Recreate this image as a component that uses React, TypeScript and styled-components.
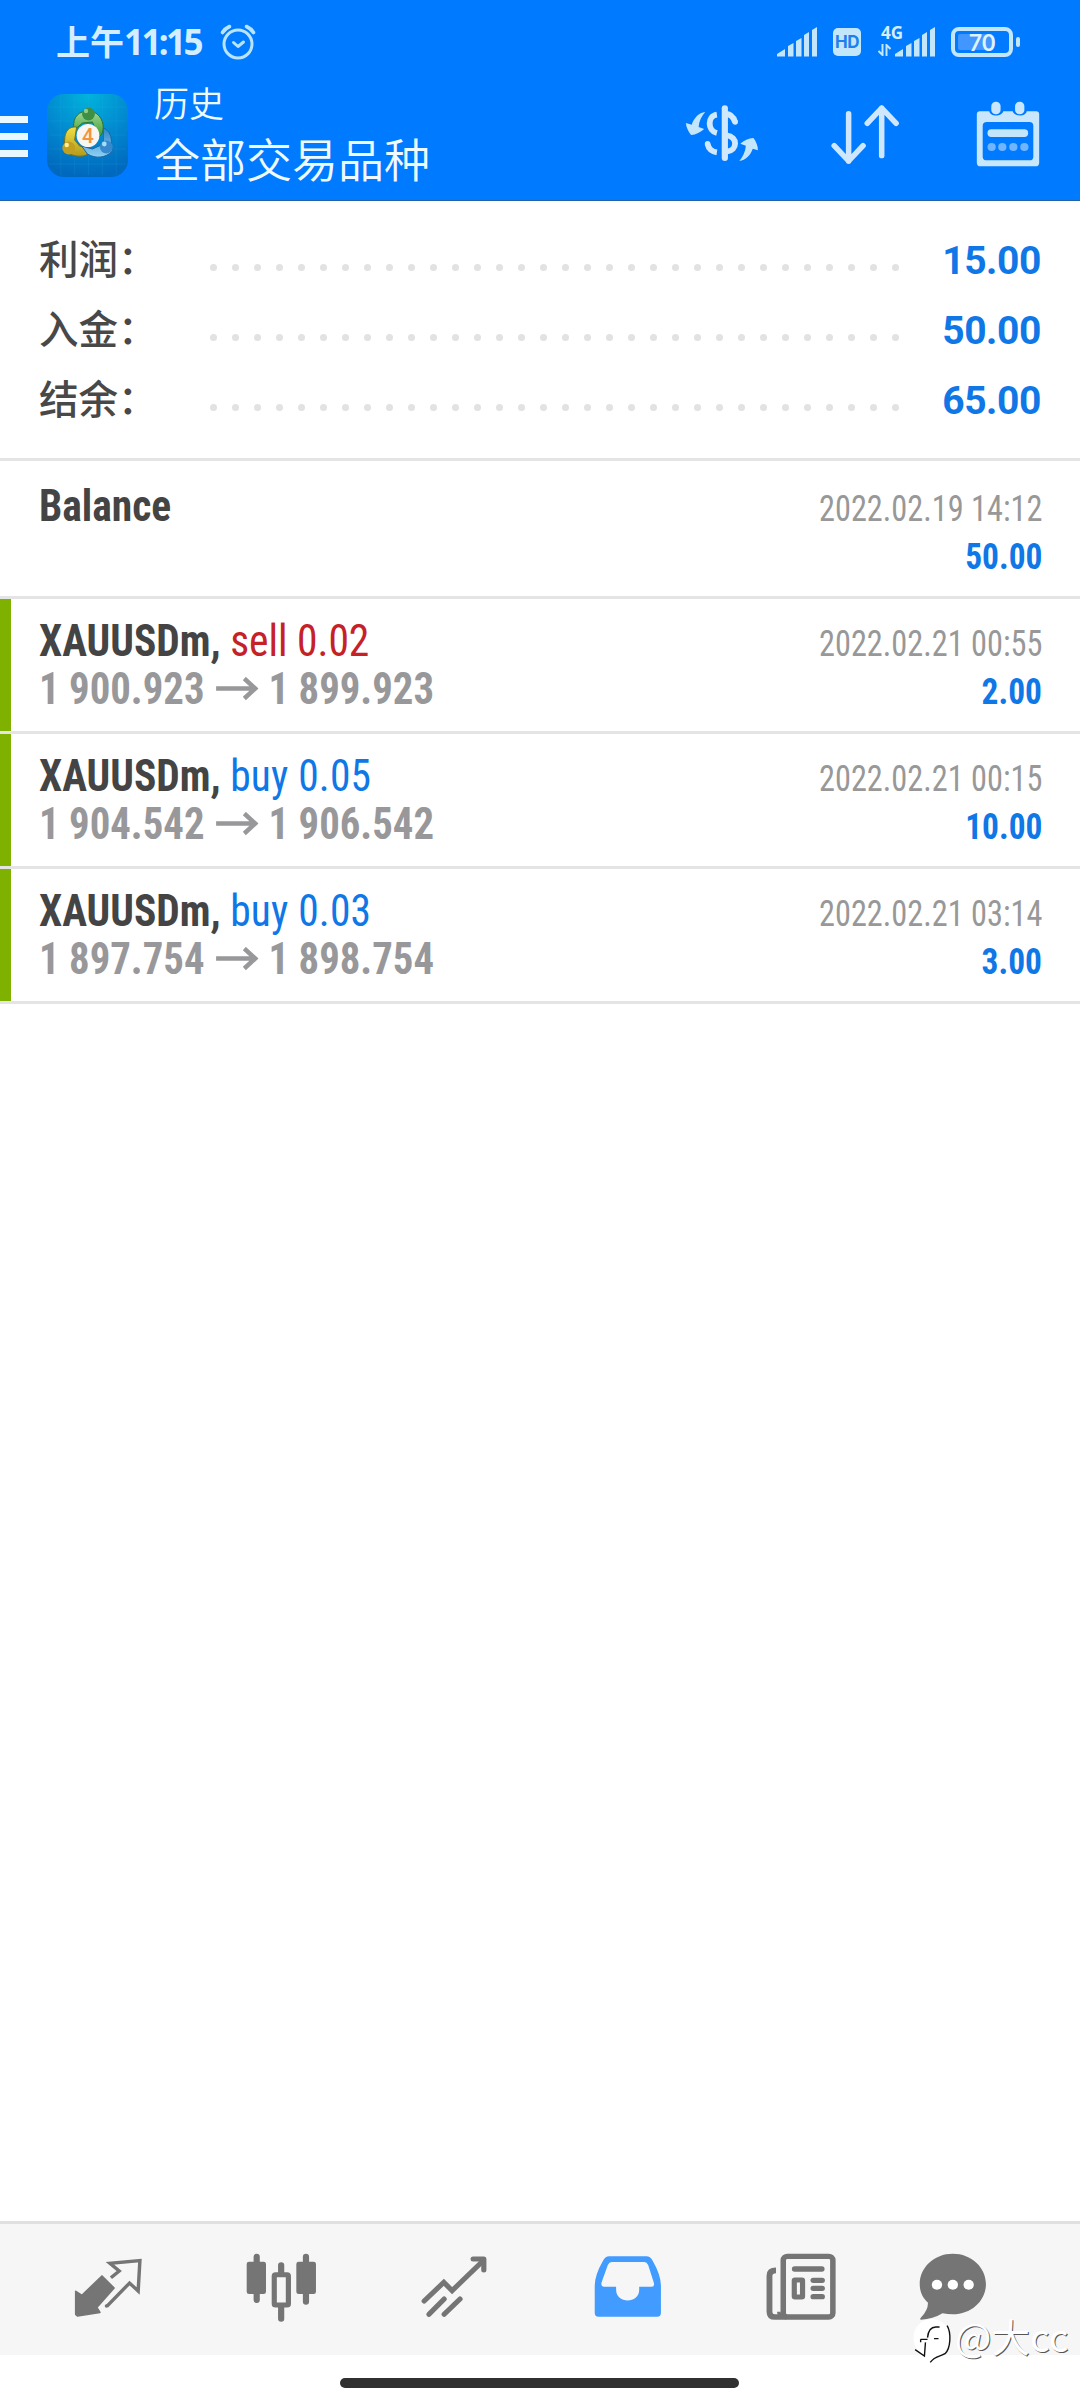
import React from "react";
import styled, { createGlobalStyle } from "styled-components";

const GlobalStyle = createGlobalStyle`
  * { box-sizing: border-box; }
  body { margin: 0; background: #fff; }
`;

const cjk = `"Noto Sans CJK SC", sans-serif`;
const latin = `Roboto, "Noto Sans CJK SC", sans-serif`;
const condensed = `"Roboto Condensed", Roboto, sans-serif`;
const accent = "#0f77e6";

const Screen = styled.div`
  position: relative;
  width: 1080px;
  height: 2400px;
  display: flex;
  flex-direction: column;
  background: #fff;
  overflow: hidden;
`;

const Header = styled.header`
  height: 201px;
  background: #007aff;
  border-bottom: 1px solid #1f63a6;
  display: flex;
  flex-direction: column;
  flex: none;
`;

const StatusBar = styled.div`
  height: 80px;
  padding: 3px 60px 0 56px;
  display: flex;
  align-items: center;
  justify-content: space-between;
`;

const StatusGroup = styled.div`
  display: flex;
  align-items: center;
`;

const Clock = styled.span`
  display: flex;
  align-items: baseline;
  font: 700 34px/40px ${cjk};
  color: #d5eeff;
  margin-right: 19px;
`;

const ClockDigits = styled.span`
  font: 700 35px/40px "Noto Sans", sans-serif;
  letter-spacing: -2.6px;
`;

const HdBadge = styled.span`
  width: 28px;
  height: 28px;
  margin: 1px 17px 0 16px;
  border-radius: 5px;
  background: #c4e6fb;
  color: #1e80ee;
  font: 700 17px/29px Inter, sans-serif;
  letter-spacing: -0.5px;
  text-align: center;
`;

const NetworkType = styled.span`
  display: flex;
  flex-direction: column;
  width: 17px;
  height: 32px;
  font: 700 17px/14px "Noto Sans", sans-serif;
  color: #d5eeff;
  white-space: nowrap;
`;

const NetworkLabel = styled.span`
  padding-left: 3px;
  height: 18px;
`;

const Battery = styled.span`
  position: relative;
  width: 62px;
  height: 30px;
  margin: 0 3px 0 16px;
  border: 4px solid #c4e6fb;
  border-radius: 8px;
  padding: 3px;
  display: flex;
`;

const BatteryFill = styled.span<{ $level: number }>`
  width: ${(p) => p.$level}%;
  background: #4296ff;
  border-radius: 2px;
`;

const BatteryText = styled.span`
  position: absolute;
  inset: 0;
  text-align: center;
  font: 700 23px/23px Lato, sans-serif;
  color: #dff2ff;
`;

const BatteryNub = styled.span`
  width: 4px;
  height: 10px;
  border-radius: 2px;
  background: #c4e6fb;
`;

const Toolbar = styled.div`
  flex: 1;
  display: flex;
  align-items: flex-start;
`;

const MenuButton = styled.button`
  width: 28px;
  height: 41px;
  margin: 36px 19px 0 0;
  padding: 0;
  border: 0;
  background: none;
  display: flex;
  flex-direction: column;
  justify-content: space-between;
`;

const MenuLine = styled.span`
  width: 28px;
  height: 7px;
  background: #e9f7ff;
`;

const LogoSvg = styled.svg`
  margin-top: 14px;
`;

const Titles = styled.div`
  margin-left: 26px;
  flex: 1;
  color: #effaff;
  font-family: ${cjk};
`;

const Caption = styled.div`
  font-size: 35px;
  line-height: 44px;
  font-weight: 350;
`;

const Title = styled.div`
  font-size: 46px;
  line-height: 56px;
  margin-top: 5px;
  font-weight: 350;
`;

const Actions = styled.div`
  display: grid;
  grid-template-columns: 139px 153px 72px;
  padding-right: 36px;
`;

const Summary = styled.section`
  height: 260px;
  flex: none;
  padding: 23px 39px 0 39px;
  border-bottom: 3px solid #e4e4e4;
`;

const SummaryRow = styled.div`
  height: 70px;
  display: grid;
  grid-template-columns: 171px 689px 1fr;
  align-items: baseline;
`;

const SummaryLabel = styled.span`
  font: 500 39.5px/66px ${cjk};
  color: #484848;
  white-space: nowrap;
`;

const Leader = styled.span`
  display: flex;
  justify-content: space-between;
  transform: translateY(-3px);
`;

const Dot = styled.span`
  width: 7px;
  height: 7px;
  border-radius: 50%;
  background: #e2e2e2;
`;

const SummaryValue = styled.span`
  font: 700 39px/66px ${latin};
  letter-spacing: -0.4px;
  color: ${accent};
  text-align: right;
`;

const DealRow = styled.article<{ $first: boolean }>`
  height: ${(p) => (p.$first ? 138 : 135)}px;
  flex: none;
  display: grid;
  grid-template-columns: 11px 1fr;
  border-bottom: 3px solid #e4e4e4;
  padding-top: ${(p) => (p.$first ? 3 : 0)}px;
`;

const Marker = styled.span<{ $on: boolean }>`
  background: ${(p) => (p.$on ? "#7fb100" : "transparent")};
`;

const DealBody = styled.div`
  padding: 18px 38px 0 28px;
`;

const DealLine = styled.div`
  height: 48px;
  display: flex;
  align-items: baseline;
  justify-content: space-between;
  white-space: nowrap;
  font-family: ${condensed};
  font-stretch: 75%;
  line-height: 48px;
`;

const Symbol = styled.span`
  font-size: 44px;
  font-weight: 700;
  color: #444;
  transform: scaleX(0.942);
  transform-origin: left;
`;

const Side = styled.span<{ $side: "buy" | "sell" }>`
  font-weight: 400;
  letter-spacing: ${(p) => (p.$side === "buy" ? 0.2 : 0)}px;
  color: ${(p) => (p.$side === "buy" ? accent : "#c62127")};
`;

const Price = styled.span`
  font-size: 44px;
  font-weight: 700;
  color: #98989b;
  transform: scaleX(0.927);
  transform-origin: left;
`;

const ArrowSvg = styled.svg`
  margin: 0 11px 3px 12px;
`;

const Time = styled.span`
  font-size: 36.5px;
  color: #989898;
  transform: scaleX(0.885);
  transform-origin: right;
`;

const Amount = styled.span`
  font-size: 36.5px;
  font-weight: 700;
  color: ${accent};
  transform: scaleX(0.915);
  transform-origin: right;
`;

const Spacer = styled.div`
  flex: 1;
`;

const Nav = styled.nav`
  height: 134px;
  flex: none;
  border-top: 3px solid #e0e0e0;
  background: #f6f6f6;
  padding-left: 21px;
  display: flex;
`;

const NavItem = styled.button<{ $width: number }>`
  width: ${(p) => p.$width}px;
  padding: 0;
  border: 0;
  background: none;
  display: flex;
  justify-content: center;
`;

const Gesture = styled.div`
  height: 45px;
  flex: none;
  display: flex;
  justify-content: center;
  padding: 23px 2px 0 0;
`;

const HomeBar = styled.span`
  width: 399px;
  height: 10px;
  border-radius: 5px;
  background: #303030;
`;

const Watermark = styled.div`
  position: absolute;
  left: 910px;
  top: 2313px;
  display: flex;
  align-items: flex-start;
`;

const WatermarkText = styled.span`
  font: 400 38.5px/44px ${cjk};
  color: #fff;
  text-shadow: 1px 1px 0 #555;
`;

type IconProps = { box: string; w: number; h: number; children: React.ReactNode };

const Icon = ({ box, w, h, children }: IconProps) => (
  <svg width={w} height={h} viewBox={box} preserveAspectRatio="none" fill="none">
    {children}
  </svg>
);

const AlarmIcon = () => (
  <svg width="36" height="36" viewBox="0 0 36 36" fill="none" stroke="#b8e4ff" strokeWidth="3" strokeLinecap="round">
    <circle cx="18" cy="20" r="14" />
    <path d="M2.5 8.5Q5 4.500 9.500 2.500M33.500 8.500Q31 4.500 26.500 2.500" strokeWidth="3.600" />
    <path d="M13.500 18.500L18 22.500L23.500 18" strokeLinejoin="round" />
  </svg>
);

const SignalIcon = () => (
  <svg width="40" height="30" viewBox="0 0 40 30" fill="#c4e6fb">
    <path d="M0 29.500V27L8 22V29.500ZM11 29.500V19L16.500 16V29.500ZM19 29.500V14L24.500 11V29.500ZM27 29.500V8L32 5V29.500ZM35 29.500V3L40 0V29.500Z" />
  </svg>
);

const DataArrows = () => (
  <svg width="13" height="12" viewBox="0 0 13 12" fill="none" stroke="#c4e6fb" strokeWidth="2">
    <path d="M4.500 0V11L0.500 7M8.500 12V1L12.500 5" />
  </svg>
);

const AppLogo = () => (
  <LogoSvg width="81" height="83" viewBox="0 0 82 83" preserveAspectRatio="none">
    <defs>
      <radialGradient id="sky" cx="0.5" cy="0" r="1">
        <stop offset="0" stopColor="#00b4dc" />
        <stop offset="0.55" stopColor="#0288cf" />
        <stop offset="1" stopColor="#0068bd" />
      </radialGradient>
      <linearGradient id="green" x1="0" y1="0" x2="0" y2="1">
        <stop offset="0" stopColor="#a2d99c" />
        <stop offset="1" stopColor="#3b9a2d" />
      </linearGradient>
      <linearGradient id="gold" x1="0" y1="0" x2="0" y2="1">
        <stop offset="0" stopColor="#f0df45" />
        <stop offset="1" stopColor="#b39a1c" />
      </linearGradient>
      <linearGradient id="blue" x1="0" y1="0" x2="0" y2="1">
        <stop offset="0" stopColor="#2f86c8" />
        <stop offset="1" stopColor="#8fd0f4" />
      </linearGradient>
    </defs>
    <rect width="82" height="83" rx="17" fill="url(#sky)" />
    <path d="M14 2V81M28 2V81M42 2V81M56 2V81M70 2V81M2 13H80M2 27H80M2 41H80M2 55H80M2 70H80" stroke="#35b5e8" strokeOpacity="0.15" />
    <path d="M27 34C26 22 33 17 42 17C51 17 57 25 57 34C57 38 55 42 52 43L46 28L36 29L30 34Z" fill="url(#green)" stroke="#28752a" />
    <path d="M30 33C22 32 18 38 18 45L17 56C22 61 32 64 40 61L43 55L33 52L28 46Z" fill="url(#gold)" stroke="#77711c" />
    <path d="M57 34C63 36 66 43 65 50L66 57C60 64 49 65 41 60L35 52L46 55L57 50Z" fill="url(#blue)" stroke="#1d669f" />
    <circle cx="42" cy="20" r="6.500" fill="#3e8f43" />
    <circle cx="39.500" cy="17" r="2.200" fill="#8ecb8c" />
    <circle cx="22" cy="54" r="6.500" fill="#c0a01e" />
    <circle cx="20" cy="51" r="2.200" fill="#fff0a0" />
    <circle cx="60" cy="53" r="6.500" fill="#3689cc" />
    <circle cx="58" cy="50" r="2.400" fill="#a5dcfb" />
    <circle cx="41.500" cy="41.500" r="11.500" fill="#f8f5f2" />
    <text x="41.500" y="49" fontFamily="Roboto, sans-serif" fontSize="21" fontWeight="500" textAnchor="middle" fill="#f5923e">4</text>
  </LogoSvg>
);

const CurrencyIcon = () => (
  <Icon box="407 240 261 300" w={90} h={100}>
    <g stroke="#d0e8fc" strokeWidth="17" fill="none">
      <path d="M537 325V474" strokeLinecap="round" strokeWidth="18" />
      <path d="M514 344C486 348 486 392 514 399" />
      <path d="M537 341C552 341 562 349 567 367" />
      <circle cx="567" cy="366" r="8" fill="#d0e8fc" stroke="none" />
      <path d="M487 432C490 446 500 455 514 457" />
      <circle cx="487" cy="431" r="8" fill="#d0e8fc" stroke="none" />
      <path d="M542 406C575 410 575 451 542 455" />
    </g>
    <path d="M480 336C462 338 447 354 441 374L424 369C425 382 431 395 439 405C453 404 467 397 477 387L461 381C462 363 470 348 480 336Z" fill="#c4e6fb" />
    <path d="M579 483C597 480 612 465 618 446L633 451C633 438 628 425 620 414C606 415 592 422 582 431L598 437C597 455 589 470 579 483Z" fill="#c4e6fb" />
  </Icon>
);

const SortIcon = () => (
  <Icon box="810 240 270 300" w={93} h={100}>
    <path d="M896 341V484M854 437L896 483L938 437M992 467V324M950 370L992 324L1034 370" stroke="#cfe7fd" strokeWidth="16" strokeLinecap="round" strokeLinejoin="round" />
  </Icon>
);

const CalendarIcon = () => (
  <Icon box="1255 240 209 300" w={72} h={100}>
    <path fillRule="evenodd" d="M1278 334H1305C1308 351 1341 351 1346 334H1373C1378 351 1411 351 1414 334H1441Q1450 334 1450 343V488Q1450 499 1439 499H1280Q1269 499 1269 488V343Q1269 334 1278 334ZM1298 366Q1286 366 1286 378V470Q1286 481 1298 481H1422Q1433 481 1433 470V378Q1433 366 1422 366Z" fill="#c9e7fc" />
    <rect x="1311" y="305" width="27" height="38" rx="13" fill="#c9e7fc" />
    <rect x="1380" y="305" width="27" height="38" rx="13" fill="#c9e7fc" />
    <rect x="1300" y="388" width="118" height="23" rx="11" fill="#c4e6fb" />
    {[1312, 1343, 1375, 1407].map((x) => (
      <circle key={x} cx={x} cy="441" r="12" fill="#70b5ff" />
    ))}
  </Icon>
);

const gray = "#757575";

const QuotesIcon = () => (
  <Icon box="213 73 203 393" w={70} h={131}>
    <path d="M297 229L332 265L282 323L291 338L226 349L221 344V275L239 287Z" fill={gray} stroke={gray} strokeWidth="5" strokeLinejoin="round" />
    <path d="M323 234L347 214L320 191L407 183L402 274L377 250L311 320" stroke={gray} strokeWidth="10" />
    <circle cx="310" cy="319" r="5" fill={gray} />
  </Icon>
);

const ChartIcon = () => (
  <Icon box="714 73 206 393" w={71} h={131}>
    <path d="M745 171V301M888 171V306M816 197V220M816 322V357" stroke={gray} strokeWidth="18" strokeLinecap="round" />
    <rect x="716" y="186" width="56" height="97" rx="7" fill={gray} />
    <rect x="860" y="186" width="57" height="97" rx="7" fill={gray} />
    <rect x="796" y="225" width="41" height="91" rx="4" stroke={gray} strokeWidth="15" />
  </Icon>
);

const TradeIcon = () => (
  <Icon box="1217 73 203 393" w={70} h={131}>
    <path d="M1232 304L1289 248L1313 273L1400 186M1246 344L1290 298M1290 344L1336 298" stroke={gray} strokeWidth="15" strokeLinecap="round" />
    <path d="M1374 178H1405V211" stroke={gray} strokeWidth="15" strokeLinecap="round" strokeLinejoin="round" />
  </Icon>
);

const HistoryIcon = () => (
  <Icon box="153 73 203 393" w={70} h={131}>
    <path fillRule="evenodd" d="M200 170H308Q319 170 326 183Q350 226 350 258V339Q350 351 339 351H169Q158 351 158 339V258Q158 226 182 183Q189 170 200 170ZM207 187Q200 187 196 196L178 248Q175 261 184 261H220V270C220 313 287 313 287 270V261H323Q333 261 329 248L313 196Q309 187 302 187Z" fill="#429bff" />
  </Icon>
);

const NewsIcon = () => (
  <Icon box="653 73 209 393" w={72} h={131}>
    <rect x="706" y="170" width="144" height="182" rx="12" stroke={gray} strokeWidth="16" />
    <path d="M685 212Q666 212 666 228V336Q666 352 682 352H716" stroke={gray} strokeWidth="17" />
    <path d="M693 336Q693 347 704 347" stroke={gray} strokeWidth="10" />
    <path d="M739 208H818M793 242H819M793 266H819M793 291H819" stroke={gray} strokeWidth="16" strokeLinecap="round" />
    <rect x="738" y="241" width="24" height="51" rx="2" stroke={gray} strokeWidth="15" />
  </Icon>
);

const ChatIcon = () => (
  <Icon box="1098 73 203 393" w={70} h={131}>
    <path d="M1199 162C1253 162 1295 203 1295 253C1295 303 1253 344 1199 344Q1184 344 1169 341Q1141 359 1107 360Q1102 359 1106 354Q1127 332 1127 309C1111 294 1103 276 1103 253C1103 203 1145 162 1199 162Z" fill={gray} />
    {[1153, 1199, 1245].map((x) => (
      <circle key={x} cx={x} cy="255" r="15" fill="#fff" />
    ))}
  </Icon>
);

const WatermarkLogo = () => (
  <Icon box="1075 342 131 156" w={45} h={52}>
    <path d="M1138 360C1170 360 1191 386 1191 415C1191 448 1170 468 1150 474L1133 490L1137 476C1105 474 1085 448 1085 415C1085 386 1108 360 1138 360Z" fill="#fff" />
    <path d="M1161 384H1150C1135 384 1128 395 1126 416M1106 421H1126M1106 421V430M1145 419H1158M1120 430L1117 471L1090 452" stroke="#111" strokeWidth="4" />
    <path d="M1183 380C1196 402 1193 450 1177 464C1163 473 1148 470 1134 490" stroke="#111" strokeWidth="4" />
  </Icon>
);

const Arrow = () => (
  <ArrowSvg width="46" height="24" viewBox="0 0 43 24" preserveAspectRatio="none" fill="none" stroke="#98989b" strokeWidth="4.500">
    <path d="M0 11.500H40M28.500 1.500L39.500 11.500L28.500 21.500" />
  </ArrowSvg>
);

const summary = [
  { label: "利润：", value: "15.00" },
  { label: "入金：", value: "50.00" },
  { label: "结余：", value: "65.00" },
];

type Deal = {
  symbol: string;
  side?: "buy" | "sell";
  volume?: string;
  open?: string;
  close?: string;
  time: string;
  amount: string;
};

const deals: Deal[] = [
  { symbol: "Balance", time: "2022.02.19 14:12", amount: "50.00" },
  { symbol: "XAUUSDm", side: "sell", volume: "0.02", open: "1 900.923", close: "1 899.923", time: "2022.02.21 00:55", amount: "2.00" },
  { symbol: "XAUUSDm", side: "buy", volume: "0.05", open: "1 904.542", close: "1 906.542", time: "2022.02.21 00:15", amount: "10.00" },
  { symbol: "XAUUSDm", side: "buy", volume: "0.03", open: "1 897.754", close: "1 898.754", time: "2022.02.21 03:14", amount: "3.00" },
];

const tabs = [
  { icon: <QuotesIcon />, width: 173 },
  { icon: <ChartIcon />, width: 174 },
  { icon: <TradeIcon />, width: 172 },
  { icon: <HistoryIcon />, width: 175 },
  { icon: <NewsIcon />, width: 172 },
  { icon: <ChatIcon />, width: 132 },
];

export default function App() {
  return (
    <Screen>
      <GlobalStyle />
      <Header>
        <StatusBar>
          <StatusGroup>
            <Clock>
              上午<ClockDigits>11:15</ClockDigits>
            </Clock>
            <AlarmIcon />
          </StatusGroup>
          <StatusGroup>
            <SignalIcon />
            <HdBadge>HD</HdBadge>
            <NetworkType>
              <NetworkLabel>4G</NetworkLabel>
              <DataArrows />
            </NetworkType>
            <SignalIcon />
            <Battery>
              <BatteryFill $level={70} />
              <BatteryText>70</BatteryText>
            </Battery>
            <BatteryNub />
          </StatusGroup>
        </StatusBar>
        <Toolbar>
          <MenuButton>
            <MenuLine />
            <MenuLine />
            <MenuLine />
          </MenuButton>
          <AppLogo />
          <Titles>
            <Caption>历史</Caption>
            <Title>全部交易品种</Title>
          </Titles>
          <Actions>
            <CurrencyIcon />
            <SortIcon />
            <CalendarIcon />
          </Actions>
        </Toolbar>
      </Header>
      <Summary>
        {summary.map((row) => (
          <SummaryRow key={row.label}>
            <SummaryLabel>{row.label}</SummaryLabel>
            <Leader>
              {Array.from({ length: 32 }, (_, i) => (
                <Dot key={i} />
              ))}
            </Leader>
            <SummaryValue>{row.value}</SummaryValue>
          </SummaryRow>
        ))}
      </Summary>
      {deals.map((d, i) => (
        <DealRow key={d.time} $first={i === 0}>
          <Marker $on={!!d.side} />
          <DealBody>
            <DealLine>
              <Symbol>
                {d.symbol}
                {d.side && (
                  <>
                    , <Side $side={d.side}>{d.side} {d.volume}</Side>
                  </>
                )}
              </Symbol>
              <Time>{d.time}</Time>
            </DealLine>
            <DealLine>
              <Price>
                {d.open ? (
                  <>
                    {d.open}
                    <Arrow />
                    {d.close}
                  </>
                ) : (
                  "\u00a0"
                )}
              </Price>
              <Amount>{d.amount}</Amount>
            </DealLine>
          </DealBody>
        </DealRow>
      ))}
      <Spacer />
      <Nav>
        {tabs.map((t, i) => (
          <NavItem key={i} $width={t.width}>
            {t.icon}
          </NavItem>
        ))}
      </Nav>
      <Gesture>
        <HomeBar />
      </Gesture>
      <Watermark>
        <WatermarkLogo />
        <WatermarkText>@大cc</WatermarkText>
      </Watermark>
    </Screen>
  );
}
